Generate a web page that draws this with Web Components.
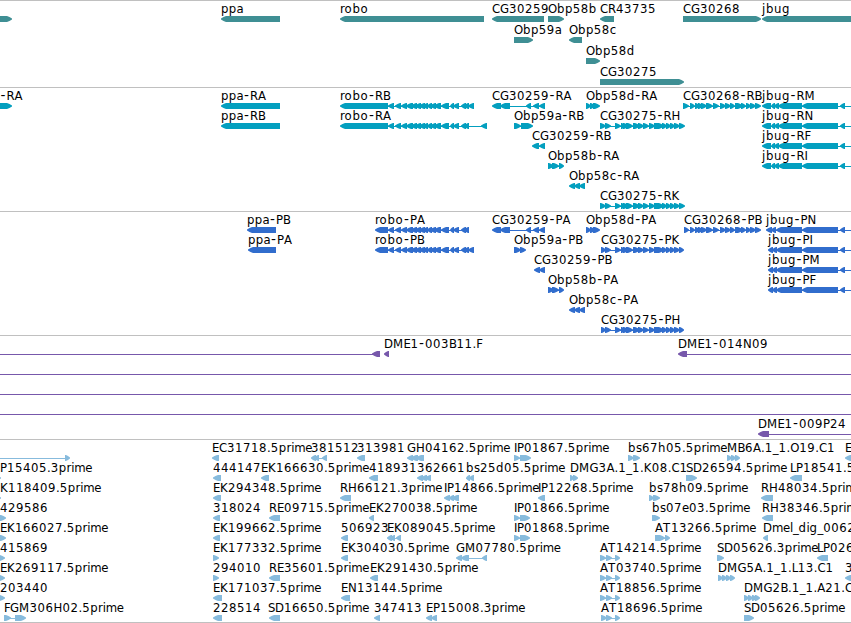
<!DOCTYPE html>
<html lang="en">
<head>
<meta charset="utf-8">
<title>Genome tracks</title>
<style>
  body {
    margin: 0;
    background: #fff;
    overflow: hidden;
  }
</style>
</head>
<body>
<genome-browser></genome-browser>

<script>
// Fixed advance of each character in a label, in px
const ADVANCE = {
  A: 8, B: 7.5, C: 8, D: 9, E: 7, F: 6, G: 9, H: 9, I: 3, K: 8, L: 6, M: 10.5, N: 9,
  O: 9, P: 7, R: 8, S: 7, T: 8, a: 7, b: 8, c: 7, d: 8, e: 7, g: 8, h: 8, i: 3,
  j: 4, l: 3, m: 11, o: 8, p: 7.8, r: 4.6, s: 6, u: 8, '-': 6.4, '.': 3.8, _: 5.6
};

// A feature is [label, x, strand, blocks, line]; blocks are "start-end" pairs,
// line is an optional "start-end" that replaces the default connector
const ROBO = '388-394 395-401 401-407 406-413 411-417 415-421 419-425 423-428 427-432 430-436 434-441 441-449 450-454 453-459 461-466 464-469';
const CG30275 = '605-611 615-621 621-625 623-629 626-633 633-640 638-644 643-649 649-655 654-664 662-667 666-671 670-675 674-680';
const CG30268 = '690-695 695-700 698-703 701-707 706-713 713-719 720-726 725-731 730-735 735-743 741-746 746-751 750-756 755-761';
const JBUG = '802-838 840-845 858-870';

const TRACKS = [
  { color: '#3f8f94', height: 87, pitch: 21, rows: [
    [
      ['', 0, '>', '-10-12'], ['ppa', 221, '<', '221-280'], ['robo', 340, '<', '340-484'],
      ['CG30259', 492, '<', '492-544'], ['Obp58b', 548, '>', '548-564'],
      ['CR43735', 600, '<', '600-614'], ['CG30268', 683, '>', '683-761'], ['jbug', 762, '<', '762-870']
    ],
    [['Obp59a', 514, '>', '514-533'], ['Obp58c', 569, '<', '569-582']],
    [['Obp58d', 586, '>', '586-600']],
    [['CG30275', 600, '>', '600-684']]
  ] },
  { color: '#039fbf', height: 124, pitch: 20, rows: [
    [
      ['-RA', 0, '>', '-10-12'], ['ppa-RA', 221, '<', '221-280'],
      ['robo-RB', 340, '<', '340-388 ' + ROBO + ' 468-474'],
      ['CG30259-RA', 492, '<', '492-501 500-510 526-531 533-539 539-545'],
      ['Obp58d-RA', 586, '>', '586-591 590-595 593-600'],
      ['CG30268-RB', 683, '>', '683-689 ' + CG30268], ['jbug-RM', 762, '<', '762-771 771-775 774-779 778-802 ' + JBUG]
    ],
    [
      ['ppa-RB', 221, '<', '221-280'], ['robo-RA', 340, '<', '340-388 ' + ROBO + ' 481-487'],
      ['Obp59a-RB', 514, '>', '514-521 521-533'],
      ['CG30275-RH', 600, '>', '600-606 ' + CG30275 + ' 679-685'],
      ['jbug-RN', 762, '<', '762-771 771-775 774-779 778-802 ' + JBUG]
    ],
    [['CG30259-RB', 532, '<', '532-539 539-545'], ['jbug-RF', 762, '<', '762-771 771-775 774-779 778-802 ' + JBUG]],
    [['Obp58b-RA', 548, '>', '548-554 552-559 559-564'], ['jbug-RI', 762, '<', '762-771 771-775 774-779 778-802 ' + JBUG]],
    [['Obp58c-RA', 569, '<', '569-575 574-580 579-585']],
    [['CG30275-RK', 600, '>', '600-606 ' + CG30275 + ' 679-685']]
  ] },
  { color: '#316dcd', height: 124, pitch: 20, rows: [
    [
      ['ppa-PB', 247, '<', '247-276'], ['robo-PA', 375, '<', '375-388 ' + ROBO],
      ['CG30259-PA', 492, '<', '492-501 500-510 526-531 533-539 539-545'],
      ['Obp58d-PA', 586, '>', '586-591 590-595 593-600'],
      ['CG30268-PB', 684, '>', '684-689 ' + CG30268], ['jbug-PN', 766, '<', '766-772 771-776 776-802 ' + JBUG]
    ],
    [
      ['ppa-PA', 248, '<', '248-276'], ['robo-PB', 375, '<', '375-388 ' + ROBO + ' 468-474'],
      ['Obp59a-PB', 514, '>', '514-521 520-526'],
      ['CG30275-PK', 601, '>', '601-606 ' + CG30275 + ' 679-684'],
      ['jbug-PI', 768, '<', '768-773 772-777 776-802 ' + JBUG]
    ],
    [['CG30259-PB', 534, '<', '534-540 539-545'], ['jbug-PM', 768, '<', '768-773 772-777 776-802 ' + JBUG]],
    [['Obp58b-PA', 548, '>', '548-554 552-559 559-564'], ['jbug-PF', 768, '<', '768-773 772-777 776-802 ' + JBUG]],
    [['Obp58c-PA', 569, '<', '569-575 574-580 579-585']],
    [['CG30275-PH', 601, '>', '601-606 ' + CG30275 + ' 679-684']]
  ] },
  { color: '#7758ab', height: 104, pitch: 20, rows: [
    [
      ['', 0, '<', '372-380', '-2-380'], ['DME1-003B11.F', 384, '<', '384-389'],
      ['DME1-014N09', 678, '<', '678-687', '678-853']
    ],
    [['', 0, '>', '', '-2-853']],
    [['', 0, '>', '', '-2-853']],
    [['', 0, '>', '', '-2-853']],
    [['DME1-009P24', 758, '<', '758-769', '758-853']]
  ] },
  { color: '#87bbdd', height: 183, pitch: 20, rows: [
    [
      ['', 0, '>', '65-70', '-2-70'], ['EC31718.5prime', 212, '<', '212-219'],
      ['381512', 311, '<', '311-316 314-319 322-327'], ['313981', 357, '<', '357-365'],
      ['GH04162.5prime', 407, '<', '407-413 411-418 416-424'], ['IP01867.5prime', 514, '>', '514-520 520-531'],
      ['bs67h05.5prime', 628, '>', '628-634 633-640'], ['MB6A.1_1.O19.C1', 727, '>', '727-732 731-736 735-740'],
      ['E', 845, '<', '845-860']
    ],
    [
      ['P15405.3prime', 0, '>', '-5-1'], ['444147', 213, '<', '213-221'], ['EK166630.5prime', 261, '<', '261-269'],
      ['418931', 369, '<', '369-378'], ['362661', 417, '<', '417-423 421-427 425-431'],
      ['bs25d05.5prime', 466, '<', '466-470 469-474'], ['DMG3A.1_1.K08.C1', 570, '>', '570-574 573-578'],
      ['SD26594.5prime', 686, '>', '686-697'], ['LP18541.5prime', 790, '<', '790-802']
    ],
    [
      ['K118409.5prime', 0, '>', '-5-1'], ['EK294348.5prime', 213, '<', '213-221'],
      ['RH66121.3prime', 340, '<', '340-351'], ['IP14866.5prime', 444, '<', '444-450 449-454 452-459'],
      ['IP12268.5prime', 538, '<', '538-545'], ['bs78h09.5prime', 649, '>', '649-654 653-660'],
      ['RH48034.5prime', 761, '<', '761-773']
    ],
    [
      ['429586', 0, '>', '-3-6'], ['318024', 213, '<', '213-220'], ['RE09715.5prime', 269, '<', '269-280'],
      ['EK270038.5prime', 369, '<', '369-374'], ['IP01866.5prime', 514, '>', '514-520 520-530'],
      ['bs07e03.5prime', 652, '>', '652-660'], ['RH38346.5prime', 762, '<', '762-773']
    ],
    [
      ['EK166027.5prime', 0, '>', '-3-6'], ['EK199662.5prime', 213, '<', '213-220'], ['506923', 341, '<', '341-348'],
      ['EK089045.5prime', 387, '<', '387-392 390-395 396-401'], ['IP01868.5prime', 514, '>', '514-520 520-530'],
      ['AT13266.5prime', 655, '>', '655-665 665-670'], ['Dmel_dig_0062', 763, '<', '763-768']
    ],
    [
      ['415869', 0, '>', '-3-5'], ['EK177332.5prime', 213, '>', '213-219'], ['EK304030.5prime', 341, '<', '341-348'],
      ['GM07780.5prime', 456, '<', '456-462 461-469 482-487'], ['AT14214.5prime', 600, '>', '600-606 606-612 615-620'],
      ['SD05626.3prime', 717, '>', '717-724'], ['LP026', 817, '<', '817-828']
    ],
    [
      ['EK269117.5prime', 0, '>', '-3-5'], ['294010', 213, '>', '213-219'], ['RE35601.5prime', 269, '<', '269-280'],
      ['EK291430.5prime', 370, '<', '370-378'], ['AT03740.5prime', 600, '>', '600-606 606-612 615-620'],
      ['DMG5A.1_1.L13.C1', 718, '>', '718-723 722-727 726-731 730-735'], ['3', 845, '<', '845-860']
    ],
    [
      ['203440', 0, '>', '-3-5'], ['EK171037.5prime', 213, '<', '213-222'], ['EN13144.5prime', 341, '<', '341-350'],
      ['AT18856.5prime', 600, '>', '600-606 606-612 615-620'],
      ['DMG2B.1_1.A21.C', 744, '>', '744-749 748-753 752-757 755-760']
    ],
    [
      ['FGM306H02.5prime', 4, '>', '4-11 15-26'], ['228514', 213, '<', '213-222'],
      ['SD16650.5prime', 268, '<', '269-280'], ['347413', 374, '<', '374-380'],
      ['EP15008.3prime', 426, '<', '426-432 431-437'], ['AT18696.5prime', 601, '>', '601-607 606-612 615-620'],
      ['SD05626.5prime', 744, '>', '744-754']
    ]
  ] }
];

// "-10-12 20-30" -> [[-10, 12], [20, 30]]
function parseSpans(text) {
  return [...text.matchAll(/(-?\d+)-(\d+)/g)].map(m => [Number(m[1]), Number(m[2])]);
}

// One lane of features with their labels
class TrackRow extends HTMLElement {
  constructor() {
    super();
    this.attachShadow({ mode: 'open' });
  }

  set features(list) {
    this.shadowRoot.innerHTML = `
      <style>
        :host { display: block; height: var(--pitch); }
        /* glyphs reach 21px down, one more than the usual pitch */
        svg { display: block; width: 100%; height: 100%; overflow: visible; }
        text { font: 11.7px "DejaVu Sans", sans-serif; fill: #000; white-space: pre; }
        .dash { font: 14px "DejaVu Sans Mono", monospace; }
        .glyph { fill: var(--track-color); }
      </style>
      <svg>
        ${list.map(f => this.glyph(f)).join('')}
        ${list.map(f => this.label(f)).join('')}
      </svg>
    `;
  }

  label([name, x]) {
    if (!name) return '';
    let pos = x;
    const xs = [...name].map(ch => {
      const at = ch === '-' ? pos - 1.3 : pos;
      pos += ADVANCE[ch] || 8;
      return at.toFixed(1);
    });
    const text = name.replace('-', '<tspan class="dash">-</tspan>');
    return `<text y="12" x="${xs.join(' ')}">${text}</text>`;
  }

  glyph([, , strand, blocks, line]) {
    const spans = parseSpans(blocks);
    const [from, to] = line ? parseSpans(line)[0] : [spans[0][0], spans[spans.length - 1][1]];
    const connector = line || spans.length > 1
      ? `<rect x="${from + 1}" y="18" width="${to - from - 2}" height="1"/>`
      : '';
    return `<g class="glyph">${connector}${spans.map(s => this.block(s, strand)).join('')}</g>`;
  }

  block([a, b], strand) {
    // short blocks keep a 1px flat tail so that they stay readable
    const head = Math.min(5, b - a - 1);
    const tip = strand === '<' ? a : b;
    const tail = strand === '<' ? b : a;
    const dir = strand === '<' ? 1 : -1;
    const mid = tip + dir * head * 0.5;
    const neck = tip + dir * head;
    const points = `${tip},17.5 ${mid},16 ${neck},15 ${tail},15 ${tail},21 ${neck},21 ${mid},20 ${tip},18.5`;
    return `<polygon points="${points}"/>`;
  }
}

// A track: rule on top, then its rows
class GenomeTrack extends HTMLElement {
  constructor() {
    super();
    this.attachShadow({ mode: 'open' });
    this.shadowRoot.innerHTML = `
      <style>
        :host {
          display: flex;
          flex-direction: column;
          box-sizing: border-box;
          border-top: 1px solid #c0c0c0;
        }
        track-row { flex: none; }
      </style>
    `;
  }

  set track({ color, height, pitch, rows }) {
    this.style.height = height + 'px';
    this.style.setProperty('--track-color', color);
    this.style.setProperty('--pitch', pitch + 'px');
    rows.forEach(features => {
      const row = document.createElement('track-row');
      this.shadowRoot.append(row);
      row.features = features;
    });
  }
}

class GenomeBrowser extends HTMLElement {
  constructor() {
    super();
    this.attachShadow({ mode: 'open' });
  }

  connectedCallback() {
    this.shadowRoot.innerHTML = `
      <style>
        :host {
          display: block;
          width: 851px;
          height: 623px;
          box-sizing: border-box;
          border-bottom: 1px solid #c0c0c0;
          overflow: hidden;
        }
      </style>
    `;
    TRACKS.forEach(data => {
      const el = document.createElement('genome-track');
      this.shadowRoot.append(el);
      el.track = data;
    });
  }
}

customElements.define('track-row', TrackRow);
customElements.define('genome-track', GenomeTrack);
customElements.define('genome-browser', GenomeBrowser);
</script>
</body>
</html>
